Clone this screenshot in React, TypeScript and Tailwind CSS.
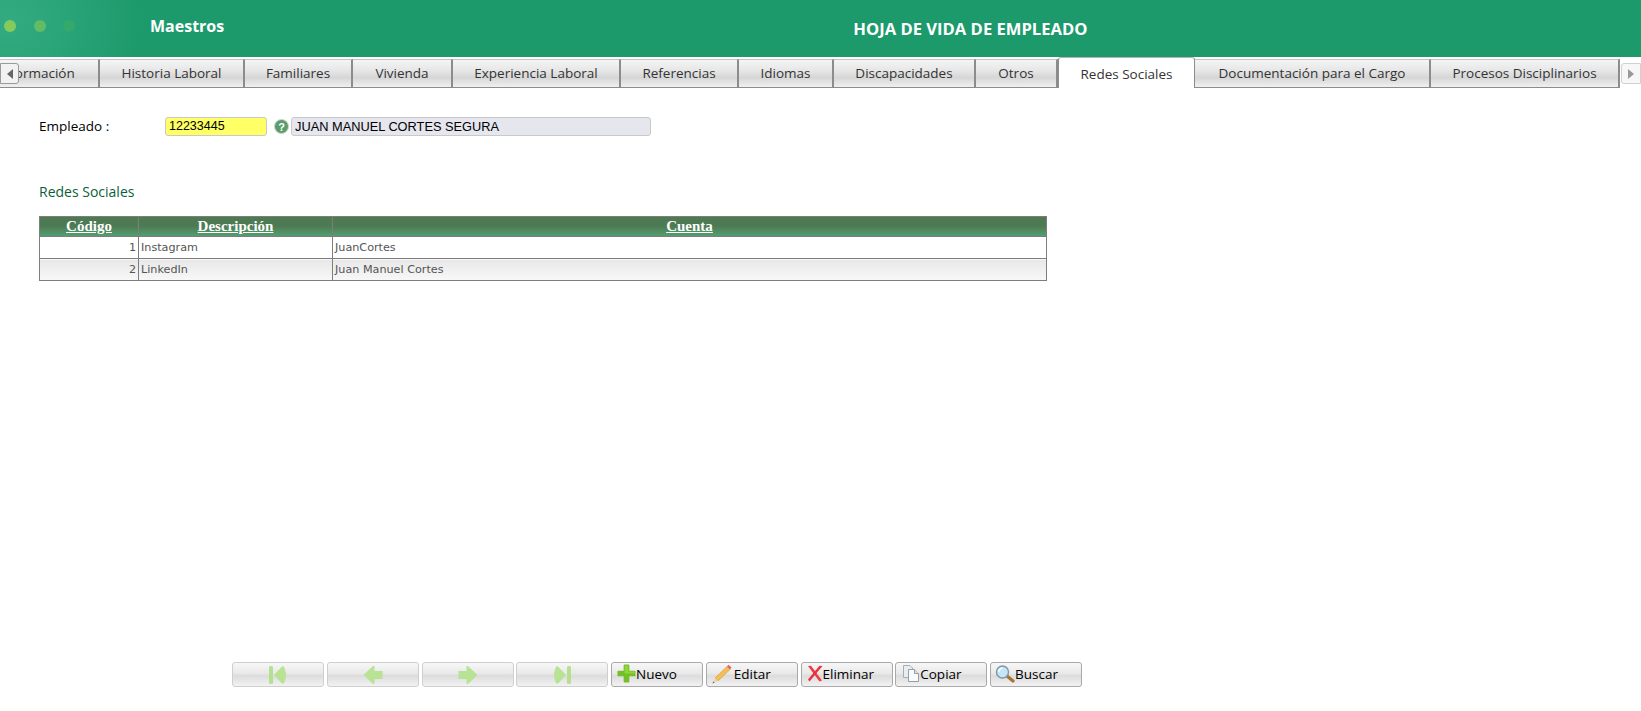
const tabs = [
  { label: "Información", width: "w-[135px]", inset: "pl-[10px]" },
  { label: "Historia Laboral", width: "w-[145px]" },
  { label: "Familiares", width: "w-[108px]" },
  { label: "Vivienda", width: "w-[100px]" },
  { label: "Experiencia Laboral", width: "w-[168px]" },
  { label: "Referencias", width: "w-[118px]" },
  { label: "Idiomas", width: "w-[95px]" },
  { label: "Discapacidades", width: "w-[142px]" },
  { label: "Otros", width: "w-[82px]" },
  { label: "Redes Sociales", width: "w-[137px]", active: true },
  { label: "Documentación para el Cargo", width: "w-[236px]" },
  { label: "Procesos Disciplinarios", width: "w-[189px]" },
];

const rows = [
  { code: 1, name: "Instagram", account: "JuanCortes" },
  { code: 2, name: "LinkedIn", account: "Juan Manuel Cortes" },
];

function NavIcon({ kind }: { kind: "first" | "prev" | "next" | "last" }) {
  const flip = kind === "next" || kind === "last";
  return (
    <svg width="20" height="20" viewBox="0 0 20 20" className={flip ? "-scale-x-100" : ""}>
      {kind === "first" || kind === "last" ? (
        <>
          <rect x="1" y="1" width="4" height="18" rx="1.5" fill="#b5e08d" />
          <path d="M6 10 L14 1.5 H16 L18 8 V12 L16 18.5 H14 Z" fill="#b9e394" />
        </>
      ) : (
        <path d="M0.5 10 L10 1 H11.5 V6 H19.5 V14 H11.5 V19 H10 Z" fill="#b9e394" />
      )}
    </svg>
  );
}

function PlusIcon() {
  return (
    <svg width="19" height="19" viewBox="0 0 20 20" className="ml-[5px] -mt-[2px] shrink-0">
      <path d="M8 0.5 H12 A1 1 0 0 1 13 1.5 V7 H18.5 A1 1 0 0 1 19.5 8 V12 A1 1 0 0 1 18.5 13 H13 V18.5 A1 1 0 0 1 12 19.5 H8 A1 1 0 0 1 7 18.5 V13 H1.5 A1 1 0 0 1 0.5 12 V8 A1 1 0 0 1 1.5 7 H7 V1.5 A1 1 0 0 1 8 0.5 Z" fill="#74bf26" />
      <path d="M8 1.5 H12 V8 H18.5 V10 H8 Z" fill="#8ed63a" />
    </svg>
  );
}

function PencilIcon() {
  return (
    <svg width="20" height="20" viewBox="0 0 20 20" className="ml-[5px] -mt-[2px] shrink-0">
      <path d="M15 2.5 L18 5.5 L6 17 L3 14 Z" fill="#f5bd56" stroke="#d19a3c" strokeWidth="0.6" />
      <path d="M15 2.5 L16.5 0.8 L19.5 3.5 L18 5.5 Z" fill="#e2675c" />
      <path d="M3 14 L6 17 L0.5 19.5 Z" fill="#ead7b0" />
      <path d="M0.5 19.5 L1.3 17.5 L2.6 18.6 Z" fill="#5a5a5a" />
    </svg>
  );
}

function CrossIcon() {
  return (
    <svg width="16" height="17" viewBox="0 0 16 17" className="ml-[5px] -mt-[2px] shrink-0">
      <path d="M1 1 L4 0.8 L15 15.5 L12.5 16.5 Z" fill="#ee3a44" />
      <path d="M15.5 1 L12.5 0.8 L1 14.5 L2.5 16.5 Z" fill="#e8323c" />
    </svg>
  );
}

function CopyIcon() {
  return (
    <svg width="16" height="17" viewBox="0 0 16 17" className="ml-[7px] -mt-[2px] shrink-0">
      <path d="M0.5 0.5 H7 L9.5 3 V12.5 H0.5 Z" fill="#e9edf0" stroke="#a5adb4" strokeWidth="1" />
      <path d="M5.5 4.5 H11.5 L15.5 8.5 V16.5 H5.5 Z" fill="#f8fafb" stroke="#959da5" strokeWidth="1" />
      <path d="M11.5 4.5 V8.5 H15.5" fill="#dde3e8" stroke="#959da5" strokeWidth="1" />
    </svg>
  );
}

function SearchIcon() {
  return (
    <svg width="20" height="18" viewBox="0 0 20 18" className="ml-[4px] -mt-[2px] shrink-0">
      <line x1="12" y1="11" x2="18" y2="16" stroke="#a87434" strokeWidth="3.2" strokeLinecap="round" />
      <circle cx="7.5" cy="7" r="6" fill="#c4e6f8" stroke="#8296a6" strokeWidth="1.4" />
      <path d="M3.8 6.8 A3.8 3.8 0 0 1 7.5 3.2" stroke="#fff" strokeWidth="1.5" fill="none" />
    </svg>
  );
}

function ToolButton({ children, dim }: { children: React.ReactNode; dim?: boolean }) {
  return (
    <button
      type="button"
      className={`flex h-[25px] w-[92px] items-center rounded-[3px] border bg-[linear-gradient(#f7f7f7,#e9e9e9_45%,#dcdcdc_55%,#f2f2f2)] text-[13.5px] text-black ${
        dim ? "justify-center border-[#cfcfcf]" : "border-[#a9a9a9]"
      }`}
    >
      {children}
    </button>
  );
}

export default function App() {
  return (
    <div className="flex h-[711px] w-[1641px] flex-col overflow-hidden bg-white font-['Open_Sans',sans-serif]">
      <header className="relative flex h-[57px] shrink-0 items-center bg-[radial-gradient(circle_at_10px_20px,#33ab82,#1d9a6c_130px)] pb-[5px] text-white">
        <div className="flex w-[150px] shrink-0 items-center gap-[17.5px] pl-[4px]">
          <span className="h-3 w-3 rounded-full bg-[#84cb5c]" />
          <span className="h-3 w-3 rounded-full bg-[#62bc64]" />
          <span className="h-3 w-3 rounded-full bg-[#35a96a]" />
        </div>
        <div className="text-[16px] font-bold">Maestros</div>
        <div className="ml-[629px] mt-[6px] text-[16.6px] font-bold">HOJA DE VIDA DE EMPLEADO</div>
      </header>

      <nav className="relative h-[31px] shrink-0">
        <div className="flex h-full items-end -ml-[35px]">
          {tabs.map((tab) =>
            tab.active ? (
              <div
                key={tab.label}
                className={`${tab.width} flex h-[31px] shrink-0 items-center justify-center rounded-t-[3px] border-x border-t border-x-[#8c8c8c] border-t-[#b5b5b5] bg-white pt-[2px] text-[13.5px] text-[#333]`}
              >
                {tab.label}
              </div>
            ) : (
              <div
                key={tab.label}
                className={`${tab.width} ${tab.inset ?? ""} flex h-[29px] shrink-0 items-center justify-center whitespace-nowrap border-r-2 border-b border-t border-r-[#8c8c8c] border-b-[#8c8c8c] border-t-[#c4c4c4] bg-[linear-gradient(#f5f5f5,#e6e6e6_40%,#d6d6d6_65%,#f0f0f0)] text-[13.5px] text-[#333]`}
              >
                {tab.label}
              </div>
            ),
          )}
        </div>
        <div className="absolute left-0 top-[6px] flex h-[21px] w-[19px] items-center justify-center rounded-r-[3px] border border-[#9a9a9a] bg-[#f2f2f2]">
          <span className="h-0 w-0 border-y-[5px] border-r-[6px] border-y-transparent border-r-[#666]" />
        </div>
        <div className="absolute right-0 top-[6px] flex h-[21px] w-[20px] items-center justify-center rounded-l-[3px] border border-[#d0d0d0] bg-[#f7f7f7]">
          <span className="h-0 w-0 border-y-[5px] border-l-[6px] border-y-transparent border-l-[#999]" />
        </div>
      </nav>

      <main className="flex-1 pl-[39px] pt-[29px]">
        <div className="flex h-[19px] items-center">
          <span className="w-[126px] text-[13.5px] text-black">Empleado :</span>
          <div className="flex h-[19px] w-[102px] items-center rounded-[3px] border border-[#c9c9c9] bg-[#ffff66] pl-[3px] font-['Liberation_Sans',sans-serif] text-[12.5px] text-black">
            12233445
          </div>
          <svg width="15" height="15" viewBox="0 0 15 15" className="ml-[7px] shrink-0">
            <circle cx="7.5" cy="7.5" r="7" fill="#5c9c6c" stroke="#c5dcc9" />
            <text x="7.5" y="11.5" textAnchor="middle" fontSize="11" fontWeight="700" fill="#fff" fontFamily="Liberation Sans">?</text>
          </svg>
          <div className="ml-[2px] flex h-[19px] w-[360px] items-center rounded-[3px] border border-[#c9c9c9] bg-[#e6e6ee] pl-[3px] font-['Liberation_Sans',sans-serif] text-[12.8px] text-black">
            JUAN MANUEL CORTES SEGURA
          </div>
        </div>

        <h2 className="mt-[47px] text-[14px] font-normal leading-[18px] text-[#0b5f3a]">Redes Sociales</h2>

        <table className="mt-[15px] w-[1008px] table-fixed border-collapse border border-[#7d7d7d] font-['DejaVu_Sans',sans-serif] text-[11.2px] leading-none">
          <thead>
            <tr className="h-[20px] bg-[linear-gradient(#4d7a52,#4d7a52_45%,#55a274)] font-['Liberation_Serif',serif] text-[15px] font-bold text-white underline">
              <th className="w-[99px] border-r border-[#7d7d7d]">Código</th>
              <th className="w-[194px] border-r border-[#7d7d7d]">Descripción</th>
              <th>Cuenta</th>
            </tr>
          </thead>
          <tbody className="text-[#555]">
            {rows.map((row, index) => (
              <tr
                key={row.code}
                className={`h-[22px] border-t border-[#7d7d7d] ${index % 2 ? "bg-[linear-gradient(#e8e8e8,#f8f8f8)]" : "bg-white"}`}
              >
                <td className="border-r border-[#7d7d7d] pr-[2px] pt-[1px] text-right">{row.code}</td>
                <td className="border-r border-[#7d7d7d] pl-[2px] pt-[1px]">{row.name}</td>
                <td className="pl-[2px] pt-[1px]">{row.account}</td>
              </tr>
            ))}
          </tbody>
        </table>
      </main>

      <footer className="mb-[24px] flex shrink-0 gap-[2.75px] pl-[232px]">
        <ToolButton dim><NavIcon kind="first" /></ToolButton>
        <ToolButton dim><NavIcon kind="prev" /></ToolButton>
        <ToolButton dim><NavIcon kind="next" /></ToolButton>
        <ToolButton dim><NavIcon kind="last" /></ToolButton>
        <ToolButton><PlusIcon /><span>Nuevo</span></ToolButton>
        <ToolButton><PencilIcon /><span className="ml-[2px]">Editar</span></ToolButton>
        <ToolButton><CrossIcon /><span>Eliminar</span></ToolButton>
        <ToolButton><CopyIcon /><span className="ml-[1px]">Copiar</span></ToolButton>
        <ToolButton><SearchIcon /><span>Buscar</span></ToolButton>
      </footer>
    </div>
  );
}
